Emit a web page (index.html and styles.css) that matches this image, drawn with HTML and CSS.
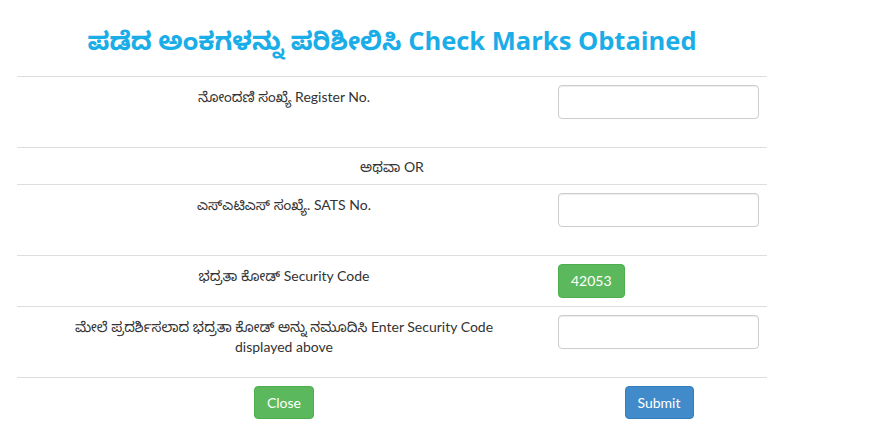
FILE: index.html
```html
<!DOCTYPE html>
<html lang="kn">
<head>
<meta charset="utf-8">
<title>Check Marks Obtained</title>
<link rel="stylesheet" href="styles.css">
</head>
<body>
<div class="wrap">
  <h1 class="title">ಪಡೆದ ಅಂಕಗಳನ್ನು ಪರಿಶೀಲಿಸಿ Check Marks Obtained</h1>
  <table class="form-table">
    <colgroup><col class="col-label"><col class="col-field"></colgroup>
    <tr>
      <td class="label">ನೋಂದಣಿ ಸಂಖ್ಯೆ Register No.</td>
      <td class="field"><input class="input" type="text"></td>
    </tr>
    <tr>
      <td class="or" colspan="2">ಅಥವಾ OR</td>
    </tr>
    <tr>
      <td class="label">ಎಸ್‌ಎಟಿಎಸ್ ಸಂಖ್ಯೆ. SATS No.</td>
      <td class="field"><input class="input" type="text"></td>
    </tr>
    <tr>
      <td class="label">ಭದ್ರತಾ ಕೋಡ್ Security Code</td>
      <td class="field"><span class="code">42053</span></td>
    </tr>
    <tr>
      <td class="label">ಮೇಲೆ ಪ್ರದರ್ಶಿಸಲಾದ ಭದ್ರತಾ ಕೋಡ್ ಅನ್ನು ನಮೂದಿಸಿ Enter Security Code<br>displayed above</td>
      <td class="field"><input class="input" type="text"></td>
    </tr>
    <tr>
      <td class="btn-cell"><button class="btn btn-green" type="button">Close</button></td>
      <td class="btn-cell"><button class="btn btn-blue" type="button">Submit</button></td>
    </tr>
  </table>
</div>
</body>
</html>
```
FILE: styles.css
```css
html, body {
  margin: 0;
  padding: 0;
  background: #fff;
}
body {
  font-family: "Lato", "Noto Sans Kannada", "Noto Sans", sans-serif;
  font-size: 14px;
  line-height: 20px;
  color: #333;
}
.wrap {
  width: 750px;
  margin-left: 17px;
}
.title {
  margin: 0 0 18px 0;
  padding-top: 22px;
  font-family: "Open Sans", "Noto Sans Kannada", "Noto Sans", sans-serif;
  font-weight: 700;
  font-size: 25.5px;
  line-height: 36px;
  color: #1aade8;
  text-align: center;
}
.form-table {
  width: 750px;
  border-collapse: collapse;
  table-layout: fixed;
}
.col-label { width: 534px; }
.col-field { width: 216px; }
.form-table td {
  border-top: 1px solid #ddd;
  padding: 8px;
  vertical-align: top;
}
.form-table td.field {
  padding-left: 7px;
}
.form-table td.label {
  padding-top: 10px;
  text-align: center;
}
.form-table td.or {
  padding: 9px 8px 7px;
  text-align: center;
}
.input {
  display: block;
  box-sizing: border-box;
  width: 201px;
  height: 34px;
  margin: 0 0 20px 0;
  padding: 6px 12px;
  border: 1px solid #ccc;
  border-radius: 4px;
  box-shadow: inset 0 1px 1px rgba(0,0,0,.075);
  background: #fff;
  font: inherit;
}
.code {
  display: inline-block;
  box-sizing: border-box;
  height: 34px;
  padding: 7px 12px;
  background: #5cb85c;
  border: 1px solid #4cae4c;
  border-radius: 4px;
  color: #fff;
  font-size: 14px;
  line-height: 18px;
}
.btn-cell {
  text-align: center;
}
.btn {
  display: inline-block;
  box-sizing: border-box;
  height: 33px;
  padding: 6px 12px;
  border: 1px solid transparent;
  border-radius: 4px;
  color: #fff;
  font-family: "Lato", sans-serif;
  font-size: 14px;
  line-height: 20px;
  cursor: pointer;
}
.btn-green {
  background: #5cb85c;
  border-color: #4cae4c;
}
.btn-blue {
  background: #428bca;
  border-color: #357ebd;
}
```
